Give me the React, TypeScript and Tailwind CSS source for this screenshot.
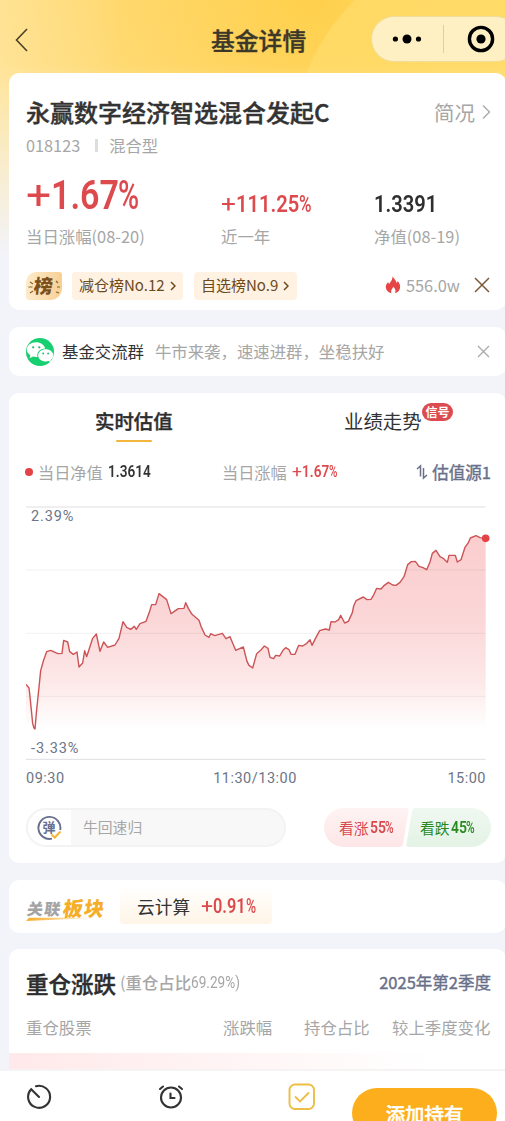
import type { ReactNode } from 'react';

const points: [number, number][] = [
  [78, 583], [87, 594], [90, 620], [98, 700], [102, 714], [105, 717], [109, 670], [122, 542], [130, 513], [140, 485], [152, 481], [165, 487], [174, 491], [186, 490],
  [191, 451], [203, 456], [209, 485], [220, 493], [231, 486], [237, 531], [248, 519], [254, 482], [260, 500], [278, 445], [289, 432], [300, 484],
  [311, 456], [323, 472], [345, 465], [357, 445], [369, 395], [380, 412], [392, 418], [403, 409], [409, 418], [420, 401], [438, 394], [448, 367],
  [455, 344], [467, 344], [477, 311], [500, 329], [513, 371], [535, 356], [552, 355], [557, 338], [565, 355], [576, 373], [597, 391], [603, 409], [615, 435],
  [627, 442], [632, 431], [644, 437], [667, 430], [678, 446], [690, 440], [707, 481], [730, 471], [741, 514], [747, 526], [758, 534], [770, 491],
  [782, 481], [793, 468], [804, 475], [810, 502], [821, 506], [827, 496], [839, 498], [849, 481], [857, 473], [867, 479], [873, 493], [885, 493],
  [896, 466], [908, 468], [919, 461], [930, 449], [936, 466], [948, 442], [959, 422], [976, 417], [988, 420], [993, 395], [1005, 396], [1016, 389], [1022, 376],
  [1034, 399], [1045, 394], [1057, 368], [1061, 348], [1068, 332], [1090, 321], [1101, 329], [1113, 328], [1122, 313], [1130, 295], [1143, 297], [1153, 286], [1165, 277],
  [1178, 285], [1188, 286], [1200, 277], [1212, 260], [1218, 241], [1223, 224], [1234, 215], [1246, 214], [1257, 229], [1269, 233], [1280, 239], [1290, 216], [1297, 190],
  [1308, 181], [1320, 200], [1331, 206], [1342, 217], [1347, 196], [1366, 196], [1372, 216], [1383, 209], [1395, 172], [1405, 158], [1411, 144],
  [1428, 137], [1440, 143], [1457, 145],
];

const line = points.map(([x, y]) => `${x},${y}`).join(' ');

function Card({ className, children }: { className: string; children: ReactNode }) {
  return <section className={`ml-[9px] w-[497px] shrink-0 rounded-[10px] bg-white pl-[17px] pr-[15px] ${className}`}>{children}</section>;
}

// Narrow figures used for prices and percentages: wide sign, condensed digits, slim percent
function Num({ value, className }: { value: string; className: string }) {
  const body = value.replace(/[+%]/g, '');
  const width = [...body].reduce((sum, c) => sum + (c === '.' ? 0.27 : 0.567), 0) * 0.83;
  return (
    <span className={`inline-flex whitespace-nowrap font-[Roboto] ${className}`}>
      {value.startsWith('+') && <span className="w-[0.62em] shrink-0 origin-left scale-x-[1.08] font-normal">+</span>}
      <span className="block shrink-0 origin-left scale-x-[0.83] font-semibold" style={{ width: `${width}em` }}>{body}</span>
      {value.endsWith('%') && <span className="w-[0.5em] shrink-0 origin-left scale-x-[0.7] font-medium">%</span>}
    </span>
  );
}

function Header() {
  return (
    <header className="flex h-[73px] w-[520px] shrink-0 pt-[16px]">
      <div className="flex w-[211px] shrink-0 items-start pl-[14px] pt-[11px]">
        <svg width="15" height="26" viewBox="0 0 15 26" fill="none" stroke="#4b4128" strokeWidth="1.6">
          <path d="M13 2L2.500 13L13 24" />
        </svg>
      </div>
      <h1 className="w-[160px] shrink-0 pt-[6px] text-[23.8px] leading-[36px] font-medium text-[#3c3728] [-webkit-text-stroke:0.4px]">基金详情</h1>
      <div className="flex h-[46px] w-[148px] shrink-0 items-center rounded-full border border-[#f0dd9b] bg-[#fff0c4]">
        <svg className="ml-[20px]" width="30" height="12" viewBox="0 0 30 12">
          <circle cx="3.4" cy="6" r="2.6" />
          <circle cx="15" cy="6" r="4.5" />
          <circle cx="26.5" cy="6" r="2.6" />
        </svg>
        <i className="ml-[21px] h-[28px] w-px bg-[#dfcf9c]" />
        <svg className="ml-[23px]" width="28" height="28" viewBox="0 0 28 28">
          <circle cx="14" cy="14" r="11.6" fill="none" stroke="#000" strokeWidth="3.4" />
          <circle cx="14" cy="14" r="4.6" />
        </svg>
      </div>
    </header>
  );
}

function Summary() {
  return (
    <Card className="h-[237px]">
      <div className="flex h-[63px] items-end justify-between pb-[6px]">
        <h2 className="text-[24px] leading-[36px] font-medium text-[#333] [-webkit-text-stroke:0.4px]">永赢数字经济智选混合发起C</h2>
        <div className="flex items-center text-[20.5px] leading-[36px] text-[#a6a6a6]">
          简况
          <svg className="ml-[7px]" width="9" height="16" viewBox="0 0 9 16" fill="none" stroke="#aaa" strokeWidth="1.4">
            <path d="M1 1.5L7.5 8L1 14.5" />
          </svg>
        </div>
      </div>
      <div className="flex h-[19px] items-center text-[16.3px] text-[#a6a6a6]">
        018123
        <i className="mr-[11px] ml-[15px] h-[13px] w-[3px] bg-[#ddd]" />
        混合型
      </div>
      <div className="grid h-[96px] grid-cols-[195px_153px_1fr] text-[16.4px] text-[#a6a6a6]">
        <div>
          <Num value="+1.67%" className="h-[70px] pt-[16px] text-[41px] leading-[48px] text-[#dd4a4d]" />
          <p className="leading-[22px]">当日涨幅(08-20)</p>
        </div>
        <div>
          <Num value="+111.25%" className="h-[70px] pt-[34px] text-[24.3px] leading-[30px] text-[#dd4a4d]" />
          <p className="leading-[22px]">近一年</p>
        </div>
        <div>
          <Num value="1.3391" className="h-[70px] pt-[34px] text-[24.3px] leading-[30px] text-[#2f2f2f]" />
          <p className="leading-[22px]">净值(08-19)</p>
        </div>
      </div>
      <div className="mt-[20px] flex h-[29px] items-center text-[15px] text-[#6b4a1c]">
        <div className="flex h-[28px] w-[36px] items-center justify-center rounded-[10px_3px_12px_3px] bg-linear-to-r from-[#fdebcb] to-[#f8cf94]">
          <svg className="overflow-visible" width="36" height="28" viewBox="0 0 36 28" stroke="#8a6227" strokeWidth="1.2">
            <path d="M4 10l3 2M2.500 15h4M4 21l3-2M30 9l2 2M31 15h3M30 20l3 1" />
            <text x="8" y="21" fontSize="19" fontWeight="900" fill="#7b501b" stroke="none" transform="skewX(-5) translate(1 0)">榜</text>
          </svg>
        </div>
        {[['减仓榜No.12', 'w-[111px] ml-[10px]'], ['自选榜No.9', 'w-[103px] ml-[11px]']].map(([label, box]) => (
          <div key={label} className={`flex h-[28px] items-center rounded-[4px] bg-[#fff2e3] pl-[7px] ${box}`}>
            {label}
            <svg className="ml-[5px]" width="6" height="10" viewBox="0 0 6 10" fill="none" stroke="#6b4a1c" strokeWidth="1.5">
              <path d="M1 1l4 4l-4 4" />
            </svg>
          </div>
        ))}
        <div className="ml-auto flex items-center text-[16.4px] text-[#a6a6a6]">
          <svg className="mr-[5px]" width="16" height="18" viewBox="0 0 16 18">
            <path fill="#e64545" d="M7.500 .5C9 2.500 11 4 11.500 7C12.200 6.500 12.500 6 12.600 5C14.500 7 15.500 9 15 12C14.500 14.800 12.500 16.800 10 17.200C11.300 14.500 10 12.300 8.200 10.800C7.800 12.500 5.300 14 6.500 17.200C3.500 16.500 1 14.500 .8 11.500C.6 8.500 2 7.500 3 6.200C3.500 7 3.700 7.600 4.300 8C5.500 5.500 7.500 4.500 7.500 .5Z" />
          </svg>
          556.0w
          <svg className="ml-[14px] mr-px" width="16" height="16" viewBox="0 0 16 16" stroke="#7b5a36" strokeWidth="1.5">
            <path d="M1 1L15 15M15 1L1 15" />
          </svg>
        </div>
      </div>
    </Card>
  );
}

function GroupBar() {
  return (
    <Card className="mt-[17px] flex h-[49px] items-center text-[16.4px]">
      <svg width="28" height="28" viewBox="0 0 28 28">
        <circle cx="14" cy="14" r="14" fill="#16cf70" />
        <path fill="#fff" d="M10 4.200C5 4.200 .8 7.400 .8 11.600C.8 14 2.200 16 4.300 17.300L3.700 20.200L7 18.500C8.500 18.900 10 19 11.500 18.900C10.500 14 14 10.800 19.200 10.500C18.400 6.900 14.500 4.200 10 4.200Z" />
        <path fill="#fff" d="M19.700 11.300C15.500 11.300 12.200 14 12.200 17.400C12.200 20.900 15.600 23.400 19.700 23.400C20.700 23.400 21.700 23.200 22.500 22.900L25.200 24.300L24.500 21.900C26.200 20.900 27.300 19.200 27.300 17.400C27.300 14 24 11.300 19.700 11.300Z" />
        <g fill="#16b866">
          <circle cx="7.200" cy="9.300" r="1.100" />
          <circle cx="13.300" cy="9.300" r="1.100" />
          <circle cx="17.200" cy="15.500" r=".9" />
          <circle cx="22.100" cy="15.500" r=".9" />
        </g>
      </svg>
      <span className="ml-[8px] text-[#333]">基金交流群</span>
      <span className="ml-[11px] text-[#a6a6a6]">牛市来袭，速速进群，坐稳扶好</span>
      <svg className="mr-px ml-auto" width="13" height="13" viewBox="0 0 13 13" stroke="#aaa" strokeWidth="1.3">
        <path d="M1 1L12 12M12 1L1 12" />
      </svg>
    </Card>
  );
}

function Chart() {
  return (
    <div className="relative mt-[22px] h-[256px] font-[Roboto] text-[14.5px] leading-[18px] tracking-[0.9px] text-[#6c7587]">
      <svg className="block" width="465" height="255" viewBox="78 48 1395 765">
        <defs>
          <linearGradient id="area" gradientUnits="userSpaceOnUse" x1="0" y1="137" x2="0" y2="717">
            <stop offset="0" stopColor="#fbcdce" />
            <stop offset=".45" stopColor="#fbd7d8" />
            <stop offset=".75" stopColor="#fde8e8" />
            <stop offset="1" stopColor="#ffffff" />
          </linearGradient>
        </defs>
        <polygon points={`78,717 ${line} 1457,717`} fill="url(#area)" />
        <path d="M78 240H1457M78 430H1457M78 619H1457" stroke="#000" strokeOpacity=".055" strokeWidth="3" />
        <path d="M78 51H1457M78 808H1457" stroke="#dedfe2" strokeWidth="3" />
        <polyline points={line} fill="none" stroke="#cc5457" strokeWidth="4.200" strokeLinejoin="round" />
        <circle cx="1457" cy="145" r="11.500" fill="#e34347" />
      </svg>
      <span className="absolute top-[2px] left-[5px]">2.39%</span>
      <span className="absolute bottom-[4px] left-[5px]">-3.33%</span>
    </div>
  );
}

function Estimate() {
  return (
    <Card className="mt-[17px] h-[470px]">
      <div className="flex h-[50px] pt-[13px] pl-[69px] text-[19.4px] leading-[30px]">
        <div className="w-[249px] font-medium text-[#2d2d2d]">
          <div className="[-webkit-text-stroke:0.4px]">实时估值</div>
          <i className="ml-[21px] mt-[4px] block h-[2px] w-[36px] rounded-full bg-[#f2b63c]" />
        </div>
        <div className="relative text-[#333]">
          业绩走势
          <span className="absolute -top-[3px] left-[78px] flex h-[18px] w-[31px] items-center justify-center rounded-full bg-[#dd4b50] text-[12px] leading-[18px] font-bold text-white">信号</span>
        </div>
      </div>
      <div className="mt-[18px] flex h-[22px] items-center text-[16.2px] leading-[22px] text-[#a6a6a6]">
        <i className="-ml-px mr-[5px] h-[8px] w-[8px] rounded-full bg-[#e34347]" />
        <div className="flex w-[184px]">
          当日净值
          <Num value="1.3614" className="ml-[5px] text-[16.4px] text-[#333]" />
        </div>
        <div className="flex">
          当日涨幅
          <Num value="+1.67%" className="ml-[5px] text-[16.4px] text-[#dd4a4d]" />
        </div>
        <div className="ml-auto flex items-center text-[16.5px] text-[#697089] [-webkit-text-stroke:0.4px]">
          <svg className="mr-[4px]" width="12" height="16" viewBox="0 0 12 16" fill="none" stroke="#697089" strokeWidth="1.5">
            <path d="M1 5L4.500 2V12.500M7.500 4V14L11 11" />
          </svg>
          估值源1
        </div>
      </div>
      <div className="h-px" />
      <Chart />
      <div className="flex h-[28px] w-[460px] items-center justify-between pt-[5px] font-[Roboto] text-[14.5px] tracking-[0.5px] text-[#6c7587]">
        <span>09:30</span>
        <span className="mr-[2px]">11:30/13:00</span>
        <span>15:00</span>
      </div>
      <div className="mt-[18px] flex h-[39px] items-center justify-between text-[14.8px]">
        <div className="flex h-[39px] w-[260px] items-center overflow-hidden rounded-full border-2 border-[#f3f3f4] bg-[#f8f8f8] text-[#a6a6a6]">
          <div className="flex h-full w-[43px] items-center justify-center bg-white pr-[1px]">
            <svg width="26" height="26" viewBox="0 0 26 26" fill="none">
              <path d="M24.200 15A11 11 0 1 0 16 23.600" stroke="#68708e" strokeWidth="1.900" />
              <text x="6.500" y="17" fontSize="13" fontWeight="700" fill="#68708e">弹</text>
              <path d="M15.500 19.500L18.800 22.500L24.500 16.500" stroke="#f2b63c" strokeWidth="2" />
            </svg>
          </div>
          <span className="ml-[12px]">牛回速归</span>
        </div>
        <div className="relative flex h-[39px] w-[167px] leading-[39px]">
          <svg className="absolute inset-0" width="167" height="39" viewBox="0 0 167 39">
            <defs>
              <linearGradient id="up" x2="0" y2="1">
                <stop stopColor="#fff3f3" />
                <stop offset="1" stopColor="#fde6e7" />
              </linearGradient>
              <linearGradient id="down" x2="0" y2="1">
                <stop stopColor="#f0f8f1" />
                <stop offset="1" stopColor="#e3f3e5" />
              </linearGradient>
            </defs>
            <path fill="url(#up)" d="M19.500 0H82Q85 0 84.500 3L79 36Q78.500 39 75 39H19.500A19.500 19.500 0 0 1 19.500 0Z" />
            <path fill="url(#down)" d="M91 0H147.500A19.500 19.500 0 0 1 147.500 39H85Q82 39 82.500 36L88 3Q88.500 0 91 0Z" />
          </svg>
          <div className="relative flex w-[81px] pl-[15px] text-[#d6494f]">
            看涨<Num value="55%" className="ml-[1px] text-[16.8px] leading-[38px]" />
          </div>
          <div className="relative flex pl-[15px] text-[#28891f]">
            看跌<Num value="45%" className="ml-[1px] text-[16.8px] leading-[38px]" />
          </div>
        </div>
      </div>
    </Card>
  );
}

function Sector() {
  return (
    <Card className="mt-[17px] flex h-[53px] items-center">
      <svg className="overflow-visible" width="80" height="32" viewBox="0 0 80 32">
        <defs>
          <linearGradient id="swoosh">
            <stop stopColor="#f7ac25" />
            <stop offset="1" stopColor="#f7ac25" stopOpacity="0" />
          </linearGradient>
        </defs>
        <path d="M3 26.800H74L0 30Z" fill="url(#swoosh)" />
        <g fontWeight="900" transform="skewX(-9)">
          <text x="4" y="24" fontSize="16" letterSpacing="1.200" fill="#a3a3a3">关联</text>
          <text x="40" y="25" fontSize="20" letterSpacing="1" fill="#f6ad27">板块</text>
        </g>
      </svg>
      <div className="ml-[14px] flex h-[35px] w-[152px] items-center rounded-[4px] bg-linear-to-b from-[#fffefd] to-[#fff5e7] pl-[17px]">
        <span className="text-[17.7px] text-[#333]">云计算</span>
        <Num value="+0.91%" className="ml-[11px] pt-[1px] text-[19.7px] leading-[34px] text-[#dd4a4d]" />
      </div>
    </Card>
  );
}

function Holdings() {
  return (
    <Card className="mt-[16px] h-[172px] overflow-hidden">
      <div className="flex h-[67px] items-center justify-between">
        <div className="flex items-center">
          <h3 className="text-[22.5px] leading-[34px] font-medium text-[#2d2d2d] [-webkit-text-stroke:0.4px]">重仓涨跌</h3>
          <div className="ml-[4px] flex text-[16.4px] leading-[24px] text-[#a6a6a6]">
            (<span className="font-medium">重仓占比</span>
            <span className="w-[48px] origin-left scale-x-[0.83] pt-px font-[Roboto]">69.29%)</span>
          </div>
        </div>
        <span className="text-[16.5px] text-[#697089] [-webkit-text-stroke:0.4px]">2025年第2季度</span>
      </div>
      <div className="flex h-[22px] items-center text-[16.4px] leading-[20px] text-[#a6a6a6]">
        <span className="w-[197px]">重仓股票</span>
        <span className="w-[81px]">涨跌幅</span>
        <span className="w-[88px]">持仓占比</span>
        <span className="whitespace-nowrap">较上季度变化</span>
      </div>
      <div className="mt-[15px] -ml-[17px] h-[60px] w-[497px] bg-linear-to-r from-[#ffe9ea] to-white to-85% pt-[11px] pl-[17px] text-[17px] leading-[26px] text-[#666]">淡茂利尔</div>
    </Card>
  );
}

function BottomBar() {
  return (
    <footer className="absolute inset-x-0 bottom-0 flex h-[52px] overflow-hidden border-t-2 border-[#f5f3f4] bg-white text-[#333]">
      <div className="w-[131px] pt-[13px] pl-[26px]">
        <svg width="26" height="26" viewBox="0 0 26 26" fill="none" stroke="#333" strokeWidth="2.100" strokeLinecap="round">
          <path d="M10 2.300A11 11 0 1 1 5.200 5.200L13 13" />
        </svg>
      </div>
      <div className="w-[130px] pt-[13px] pl-[27px]">
        <svg width="26" height="26" viewBox="0 0 26 26" fill="none" stroke="#333" strokeWidth="2.100" strokeLinecap="round">
          <circle cx="13" cy="13.500" r="10" />
          <path d="M12.500 9.500V14H16.500M2 5L5 2.500M21 2.500L24 5" />
        </svg>
      </div>
      <div className="w-[91px] pt-[12px] pl-[27px]">
        <svg width="28" height="28" viewBox="0 0 28 28" fill="none" stroke="#edbd45" strokeWidth="1.900">
          <rect x="1.500" y="1.500" width="24.500" height="24.500" rx="5.500" />
          <path d="M7 13.500L12 18.500L21 9.500" />
        </svg>
      </div>
      <button className="mt-[17px] h-[50px] w-[145px] rounded-full bg-[#fdae1c] text-[19.4px] leading-[47px] font-medium text-white [-webkit-text-stroke:0.4px]">添加持有</button>
    </footer>
  );
}

export default function App() {
  return (
    <div className="relative flex h-[1121px] w-[505px] flex-col overflow-hidden bg-[#f3f4fa] font-['Noto_Sans_CJK_SC',sans-serif]">
      <div className="absolute inset-x-0 top-0 h-[255px] overflow-hidden bg-[linear-gradient(165deg,#ffd970_0%,#ffdf86_100%)] [mask-image:linear-gradient(to_bottom,#000_0%,#000_25%,transparent_100%)]">
        <div className="absolute inset-0 bg-[radial-gradient(circle_at_310px_0px,#ffd04c_0%,transparent_220px)]" />
        <div className="absolute -top-[60px] left-[292px] h-[420px] w-[420px] rounded-full bg-linear-to-r from-[#ffdd6c] to-[#ffd95a] opacity-70" />
        <div className="absolute inset-y-0 left-0 w-[120px] bg-linear-to-r from-white/25 to-transparent" />
      </div>
      <div className="relative flex flex-col">
        <Header />
        <Summary />
        <GroupBar />
        <Estimate />
        <Sector />
        <Holdings />
      </div>
      <BottomBar />
    </div>
  );
}
